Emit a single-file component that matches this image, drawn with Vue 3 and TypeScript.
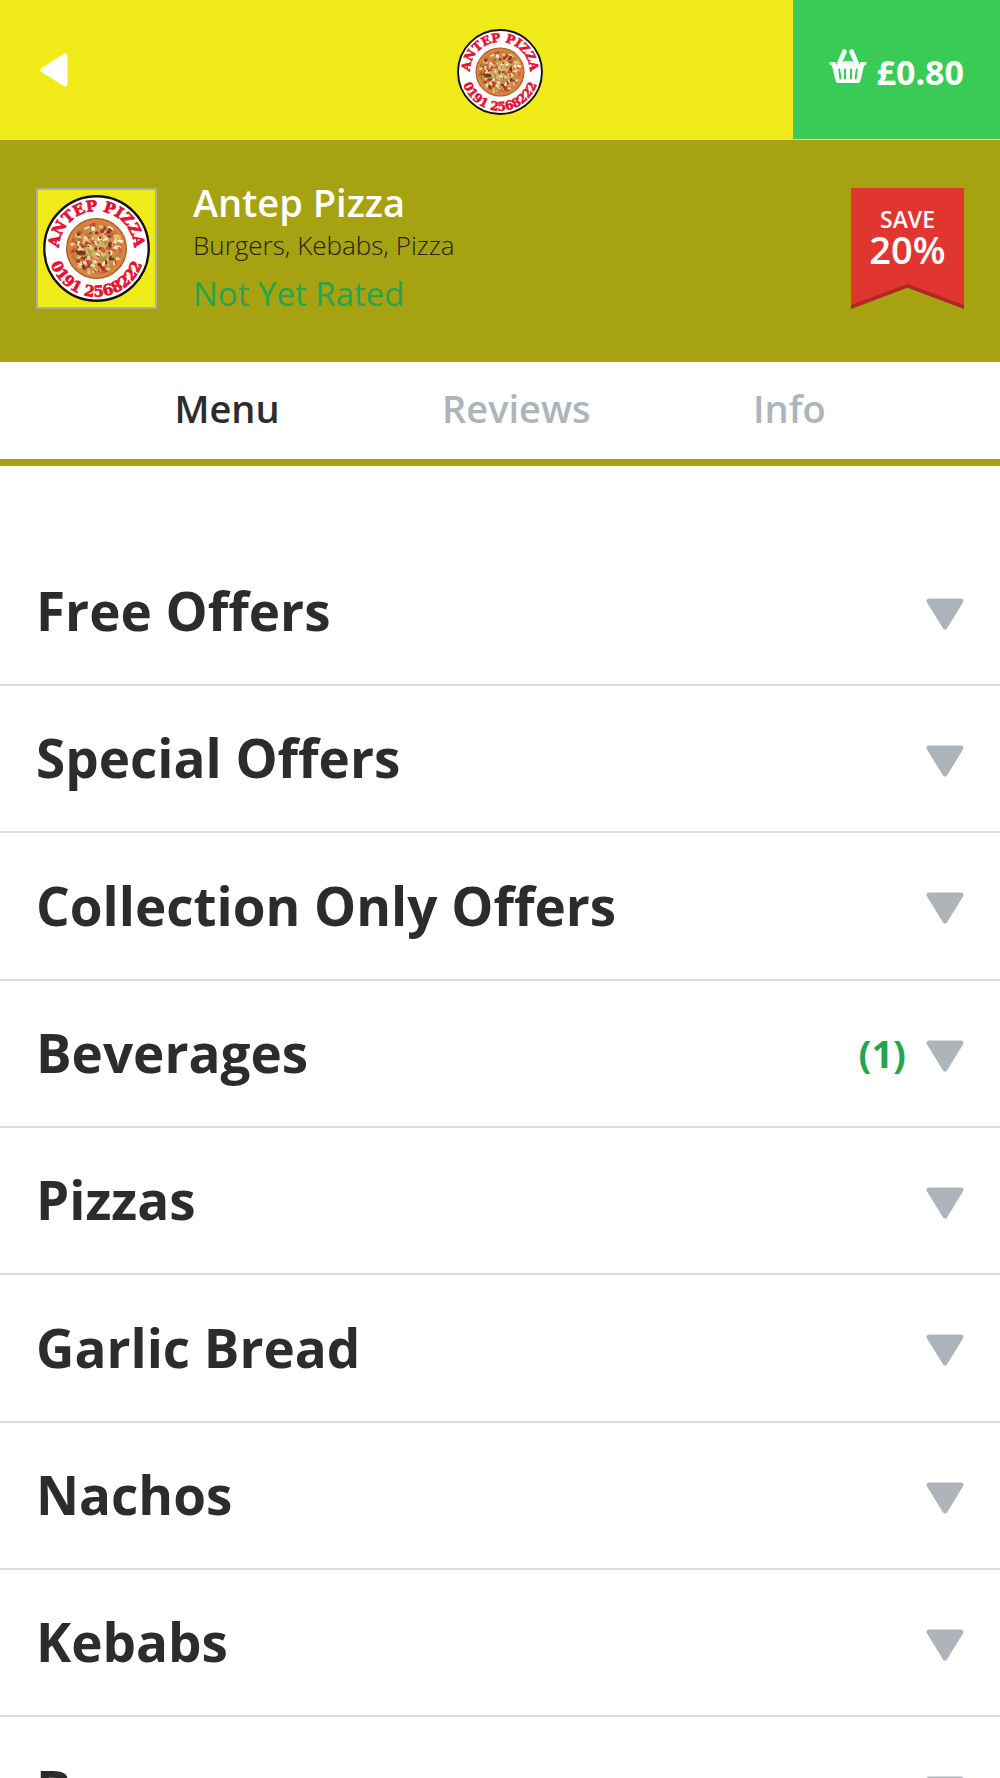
<script setup lang="ts">
import { ref } from 'vue'

interface Category {
  name: string
  count?: number
}

const tabs: string[] = ['Menu', 'Reviews', 'Info']
const activeTab = ref('Menu')

const categories: Category[] = [
  { name: 'Free Offers' },
  { name: 'Special Offers' },
  { name: 'Collection Only Offers' },
  { name: 'Beverages', count: 1 },
  { name: 'Pizzas' },
  { name: 'Garlic Bread' },
  { name: 'Nachos' },
  { name: 'Kebabs' },
  { name: 'Burgers' },
]

const toppingColours = ['#f0deaa', '#b3322a', '#e2bd7c', '#98a044', '#f7edc8', '#84331f', '#cf6238', '#ead49a', '#6b3a20', '#c2473a', '#dca866']

// Small seeded generator, so the toppings fall in the same place on every render.
let seed = 11
function next(): number {
  seed = (seed * 16807) % 2147483647
  return seed / 2147483647
}

const toppings = Array.from({ length: 190 }, () => {
  const angle = next() * Math.PI * 2
  const radius = Math.sqrt(next()) * 23.5
  const x = Math.round((50 + Math.cos(angle) * radius) * 10) / 10
  const y = Math.round((50 + Math.sin(angle) * radius) * 10) / 10
  return {
    rx: 1 + next() * 2.4,
    ry: 0.8 + next() * 1.2,
    place: `translate(${x} ${y}) rotate(${Math.round(next() * 180)})`,
    fill: toppingColours[Math.floor(next() * toppingColours.length)],
  }
})
</script>

<template>
  <div class="page">
    <svg class="defs" aria-hidden="true">
      <defs>
        <radialGradient id="crust">
          <stop offset="0" stop-color="#e9c07a" />
          <stop offset="0.8" stop-color="#cf7a3a" />
          <stop offset="0.92" stop-color="#d98a45" />
          <stop offset="1" stop-color="#a24a1c" />
        </radialGradient>
        <path id="arc-top" d="M15 50 A35 35 0 0 1 85 50" />
        <path id="arc-bottom" d="M5 50 A45 45 0 0 0 95 50" />
        <symbol id="logo" viewBox="0 0 100 100">
          <circle cx="50" cy="50" r="48.8" fill="#fff" stroke="#111" stroke-width="2.2" />
          <circle cx="50" cy="50" r="28.5" fill="url(#crust)" />
          <ellipse v-for="(t, i) in toppings" :key="i" :transform="t.place" :rx="t.rx" :ry="t.ry" :fill="t.fill" />
          <text class="logo-text" text-anchor="middle">
            <textPath href="#arc-top" startOffset="50%">ANTEP PIZZA</textPath>
          </text>
          <text class="logo-text" text-anchor="middle">
            <textPath href="#arc-bottom" startOffset="50%">0191 2568222</textPath>
          </text>
        </symbol>
      </defs>
    </svg>

    <header class="topbar">
      <button class="back" type="button" aria-label="Back">
        <svg width="28" height="34" viewBox="0 0 28 34">
          <path d="M3 17 L25 3 V31 Z" fill="#fff" stroke="#fff" stroke-width="5" stroke-linejoin="round" />
        </svg>
      </button>
      <svg class="brand" viewBox="0 0 100 100"><use href="#logo" /></svg>
      <button class="basket" type="button" aria-label="Basket £0.80">
        <svg width="38" height="36" viewBox="0 0 38 36">
          <path d="M10 16 L15.500 3.500 M28 16 L22.500 3.500" fill="none" stroke="#fff" stroke-width="4.600" stroke-linecap="round" />
          <path d="M1.500 14 H6.500 C6.500 18 12 18.500 13 15 L15 13 H23 L25 15 C26 18.500 31.500 18 31.500 14 H36.500 Q38 14 37.500 16 Q37 17.500 35 17.500 L31.500 32.500 Q31 35 28.500 35 H9.500 Q7 35 6.500 32.500 L3 17.500 Q1 17.500 0.500 16 Q0 14 1.500 14 Z" fill="#fff" />
          <path d="M10.200 21.500 L11.400 30.500 M16 21.500 V30.500 M22 21.500 V30.500 M27.800 21.500 L26.600 30.500" fill="none" stroke="#3acb57" stroke-width="2" stroke-linecap="round" />
        </svg>
        <span>£0.80</span>
      </button>
    </header>

    <section class="hero">
      <div class="thumb"><svg viewBox="0 0 100 100"><use href="#logo" /></svg></div>
      <div class="details">
        <h1>Antep Pizza</h1>
        <p class="cuisine">Burgers, Kebabs, Pizza</p>
        <p class="rating">Not Yet Rated</p>
      </div>
      <div class="ribbon">
        <svg class="ribbon-shape" viewBox="0 0 113 120" preserveAspectRatio="none" aria-hidden="true">
          <path d="M0 0 H113 V120 L56.500 99 L0 120 Z" fill="#b02724" />
          <path d="M0 0 H113 V116 L56.500 95 L0 116 Z" fill="#e13530" />
        </svg>
        <span class="save">SAVE</span>
        <span class="percent">20%</span>
      </div>
    </section>

    <nav class="tabs">
      <button
        v-for="tab in tabs"
        :key="tab"
        type="button"
        :class="{ active: tab === activeTab }"
        @click="activeTab = tab"
      >
        {{ tab }}
      </button>
    </nav>

    <main class="menu">
      <button v-for="category in categories" :key="category.name" class="category" type="button">
        <span class="name">{{ category.name }}</span>
        <span v-if="category.count" class="count">({{ category.count }})</span>
        <svg class="arrow" width="38" height="32" viewBox="0 0 38 32" aria-hidden="true">
          <path d="M3 3 H35 L19 29 Z" fill="#adb5bb" stroke="#adb5bb" stroke-width="5" stroke-linejoin="round" />
        </svg>
      </button>
    </main>
  </div>
</template>

<style>
body {
  margin: 0;
  background: #fff;
}
</style>

<style scoped>
.page {
  display: flex;
  flex-direction: column;
  height: 100vh;
  overflow: hidden;
  background: #fff;
  color: #2c2c2e;
  font-family: 'Open Sans', 'Noto Sans', sans-serif;
}

button {
  margin: 0;
  padding: 0;
  border: 0;
  background: none;
  color: inherit;
  font: inherit;
  cursor: pointer;
}

svg {
  display: block;
  flex: none;
}

.defs {
  position: absolute;
  width: 0;
  height: 0;
}

.logo-text {
  fill: #e4132f;
  stroke: #e4132f;
  stroke-width: 0.7;
  font-family: 'DejaVu Serif', serif;
  font-size: 14px;
  font-weight: 700;
}

.topbar {
  display: grid;
  grid-template-columns: 1fr auto 1fr;
  flex: none;
  align-items: center;
  height: 140px;
  background: #f0eb18;
}

.back {
  justify-self: start;
  padding: 20px 40px;
}

.brand {
  width: 86px;
  height: 86px;
  margin-top: 4px;
}

.basket {
  display: flex;
  justify-self: end;
  align-self: start;
  align-items: center;
  gap: 10px;
  height: 139px;
  padding: 0 36px;
  background: #3acb57;
  color: #fff;
  font-size: 34px;
  font-weight: 700;
}

.basket svg {
  margin-bottom: 8px;
}

.basket span {
  padding-top: 4px;
}

.hero {
  display: flex;
  flex: none;
  align-items: flex-start;
  box-sizing: border-box;
  height: 222px;
  padding: 48px 36px 0;
  background: #a7a211;
}

.thumb {
  box-sizing: border-box;
  width: 121px;
  height: 121px;
  padding: 5px;
  border: 2px solid #b0b0a2;
  background: #f0eb18;
}

.details {
  flex: 1;
  padding-left: 36px;
}

h1,
p {
  margin: 0;
}

h1 {
  margin-top: -6px;
  color: #fff;
  font-size: 38px;
  font-weight: 600;
  line-height: 40px;
}

.cuisine {
  color: #222;
  font-size: 26px;
  font-weight: 300;
  line-height: 46px;
}

.rating {
  color: #25a54e;
  font-size: 33px;
  line-height: 52px;
}

.ribbon {
  position: relative;
  display: flex;
  flex-direction: column;
  align-items: center;
  box-sizing: border-box;
  width: 113px;
  height: 121px;
  padding-top: 18px;
  color: #fff;
}

.ribbon-shape {
  position: absolute;
  inset: 0;
  width: 100%;
  height: 100%;
}

.save,
.percent {
  position: relative;
}

.save {
  font-size: 23px;
  font-weight: 600;
  line-height: 26px;
}

.percent {
  font-size: 38px;
  font-weight: 600;
  line-height: 34px;
}

.tabs {
  display: flex;
  flex: none;
  justify-content: space-evenly;
  box-sizing: border-box;
  height: 104px;
  padding: 0 12px 6px;
  border-bottom: 7px solid #a7a211;
  color: #adb5bb;
  font-size: 38px;
  font-weight: 600;
}

.tabs .active {
  color: #2c2c2e;
}

.menu {
  flex: 1;
  min-height: 0;
  padding-top: 73px;
  overflow-y: auto;
  scrollbar-width: none;
}

.category {
  display: flex;
  align-items: center;
  box-sizing: border-box;
  width: 100%;
  height: 147px;
  padding: 0 36px;
  border-bottom: 2px solid #dadada;
  text-align: left;
}

.category:nth-child(3n) {
  height: 148px;
}

.name {
  flex: 1;
  margin-bottom: 2px;
  font-size: 53px;
  font-weight: 700;
}

.count {
  margin-right: 20px;
  margin-bottom: 2px;
  color: #25a54e;
  font-size: 38px;
  font-weight: 700;
}

.arrow {
  margin-top: 4px;
}
</style>
